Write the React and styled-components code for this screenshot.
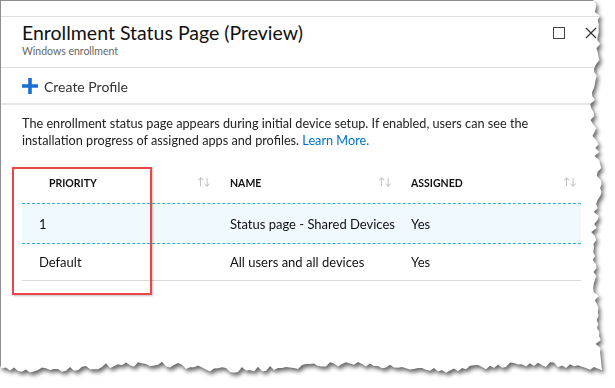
import React from 'react';
import styled, { createGlobalStyle } from 'styled-components';

const GlobalStyle = createGlobalStyle`
  html, body {
    margin: 0;
    padding: 0;
    background: #fff;
  }
  body {
    font-family: Lato, "Open Sans", sans-serif;
    color: #1e1e1e;
  }
`;

// jagged torn-paper outline for the screenshot snippet
const tornEdge = () => {
  let seed = 11;
  const rand = () => {
    seed = (seed * 16807) % 2147483647;
    return (seed - 1) / 2147483646;
  };
  const pts = ['0px 0px'];
  for (let y = 0; y <= 352; y += 4) {
    const x = 596 + Math.sin(y / 23) * 3 + (rand() - 0.5) * 6;
    pts.push(`${x.toFixed(1)}px ${y}px`);
  }
  for (let x = 602; x >= 0; x -= 4) {
    const y = 367 + Math.sin(x / 31) * 3 + (rand() - 0.5) * 6;
    pts.push(`${x}px ${y.toFixed(1)}px`);
  }
  pts.push('0px 366px');
  return `polygon(${pts.join(', ')})`;
};

const EDGE = tornEdge();

const columns = [
  { key: 'priority', label: 'Priority', width: 193, headPad: 27, cellPad: 17 },
  { key: 'name', label: 'Name', width: 181, headPad: 15, cellPad: 15 },
  { key: 'assigned', label: 'Assigned', width: 185, headPad: 15, cellPad: 15 },
];

const rows = [
  { priority: '1', name: 'Status page - Shared Devices', assigned: 'Yes', selected: true, height: 39 },
  { priority: 'Default', name: 'All users and all devices', assigned: 'Yes', height: 36 },
];

export default function App() {
  return (
    <>
      <GlobalStyle />
      <Shadow>
        <Sheet>
          <TopStrip />
          <BladeHeader>
            <TitleBlock>
              <Title>Enrollment Status Page (Preview)</Title>
              <Subtitle>Windows enrollment</Subtitle>
            </TitleBlock>
            <WindowButtons>
              <MaxIcon />
              <svg width="12" height="12" viewBox="0 0 12 12">
                <path d="M1 1 L11 11 M11 1 L1 11" stroke="#333" strokeWidth="1.3" />
              </svg>
            </WindowButtons>
          </BladeHeader>

          <Toolbar>
            <svg width="16" height="16" viewBox="0 0 16 16">
              <path d="M8 0 V16 M0 8 H16" stroke="#1a6fd4" strokeWidth="3.6" />
            </svg>
            <ToolLabel>Create Profile</ToolLabel>
          </Toolbar>

          <Description>
            The enrollment status page appears during initial device setup. If enabled, users can see the
            installation progress of assigned apps and profiles. <Link>Learn More.</Link>
          </Description>

          <TableWrap>
            <HeadRow>
              {columns.map((c) => (
                <HeadCell key={c.key} $width={c.width} $pad={c.headPad}>
                  <span>{c.label}</span>
                  <SortIcon>↑↓</SortIcon>
                </HeadCell>
              ))}
            </HeadRow>
            {rows.map((r, i) => (
              <Row key={i} $selected={r.selected} $height={r.height} $last={i === rows.length - 1}>
                {columns.map((c) => (
                  <Cell key={c.key} $width={c.width} $pad={c.cellPad}>
                    {r[c.key]}
                  </Cell>
                ))}
              </Row>
            ))}
            <Highlight />
          </TableWrap>
        </Sheet>
      </Shadow>
    </>
  );
}

const Shadow = styled.div`
  width: 615px;
  height: 388px;
  filter: drop-shadow(2px 3px 2px rgba(0, 0, 0, 0.6));
`;

const Sheet = styled.div`
  width: 608px;
  height: 382px;
  box-sizing: border-box;
  background: #fff;
  border-top: 1px solid #8e8e8e;
  border-left: 1px solid #8e8e8e;
  clip-path: ${EDGE};
  display: flex;
  flex-direction: column;
`;

const TopStrip = styled.div`
  height: 15px;
  flex: none;
`;

const BladeHeader = styled.div`
  height: 46px;
  flex: none;
  display: flex;
  justify-content: space-between;
  align-items: flex-start;
  border-top: 1px solid #dedede;
  border-bottom: 1px solid #dedede;
  padding: 4px 11px 0 21px;
  box-sizing: content-box;
`;

const TitleBlock = styled.div`
  display: flex;
  flex-direction: column;
`;

const Title = styled.div`
  font-size: 19.5px;
  line-height: 24px;
  color: #111;
`;

const Subtitle = styled.div`
  font-size: 10.5px;
  line-height: 13px;
  color: #666;
`;

const WindowButtons = styled.div`
  display: flex;
  align-items: center;
  gap: 20px;
  margin-top: 6px;
`;

const MaxIcon = styled.div`
  width: 10px;
  height: 10px;
  border: 1.5px solid #444;
`;

const Toolbar = styled.div`
  height: 35px;
  flex: none;
  display: flex;
  align-items: center;
  gap: 6px;
  padding-left: 21px;
  border-bottom: 2px solid #e6e6e6;
`;

const ToolLabel = styled.span`
  font-size: 14px;
  color: #333;
  margin-top: 2px;
`;

const Description = styled.p`
  margin: 0;
  padding: 10px 0 0 21px;
  max-width: 512px;
  font-size: 12.7px;
  line-height: 16.5px;
  color: #222;
`;

const Link = styled.span`
  color: #0072c6;
`;

const TableWrap = styled.div`
  position: relative;
  margin: 15px 0 0 21px;
  width: 559px;
`;

const HeadRow = styled.div`
  display: flex;
  height: 40px;
  border-bottom: 1px dashed #2bb0df;
`;

const HeadCell = styled.div`
  width: ${(p) => p.$width}px;
  box-sizing: border-box;
  padding: 0 5px 0 ${(p) => p.$pad}px;
  display: flex;
  align-items: center;
  justify-content: space-between;
  font-size: 10.5px;
  font-weight: 700;
  text-transform: uppercase;
  color: #111;
`;

const SortIcon = styled.span`
  font-size: 10px;
  font-weight: 400;
  color: #b8b8b8;
  letter-spacing: -1px;
  margin-top: -4px;
`;

const Row = styled.div`
  display: flex;
  align-items: center;
  height: ${(p) => p.$height}px;
  background: ${(p) => (p.$selected ? '#f0f9fd' : '#fff')};
  border-bottom: ${(p) => (p.$last ? '1px solid #d9d9d9' : '1px dashed #2bb0df')};
`;

const Cell = styled.div`
  width: ${(p) => p.$width}px;
  box-sizing: border-box;
  padding-left: ${(p) => p.$pad}px;
  font-size: 13px;
  color: #111;
  white-space: nowrap;
`;

const Highlight = styled.div`
  position: absolute;
  left: -10px;
  top: 4px;
  width: 136px;
  height: 124px;
  border: 2px solid #e8474a;
  box-shadow: 1px 1px 2px rgba(0, 0, 0, 0.25);
  pointer-events: none;
`;
